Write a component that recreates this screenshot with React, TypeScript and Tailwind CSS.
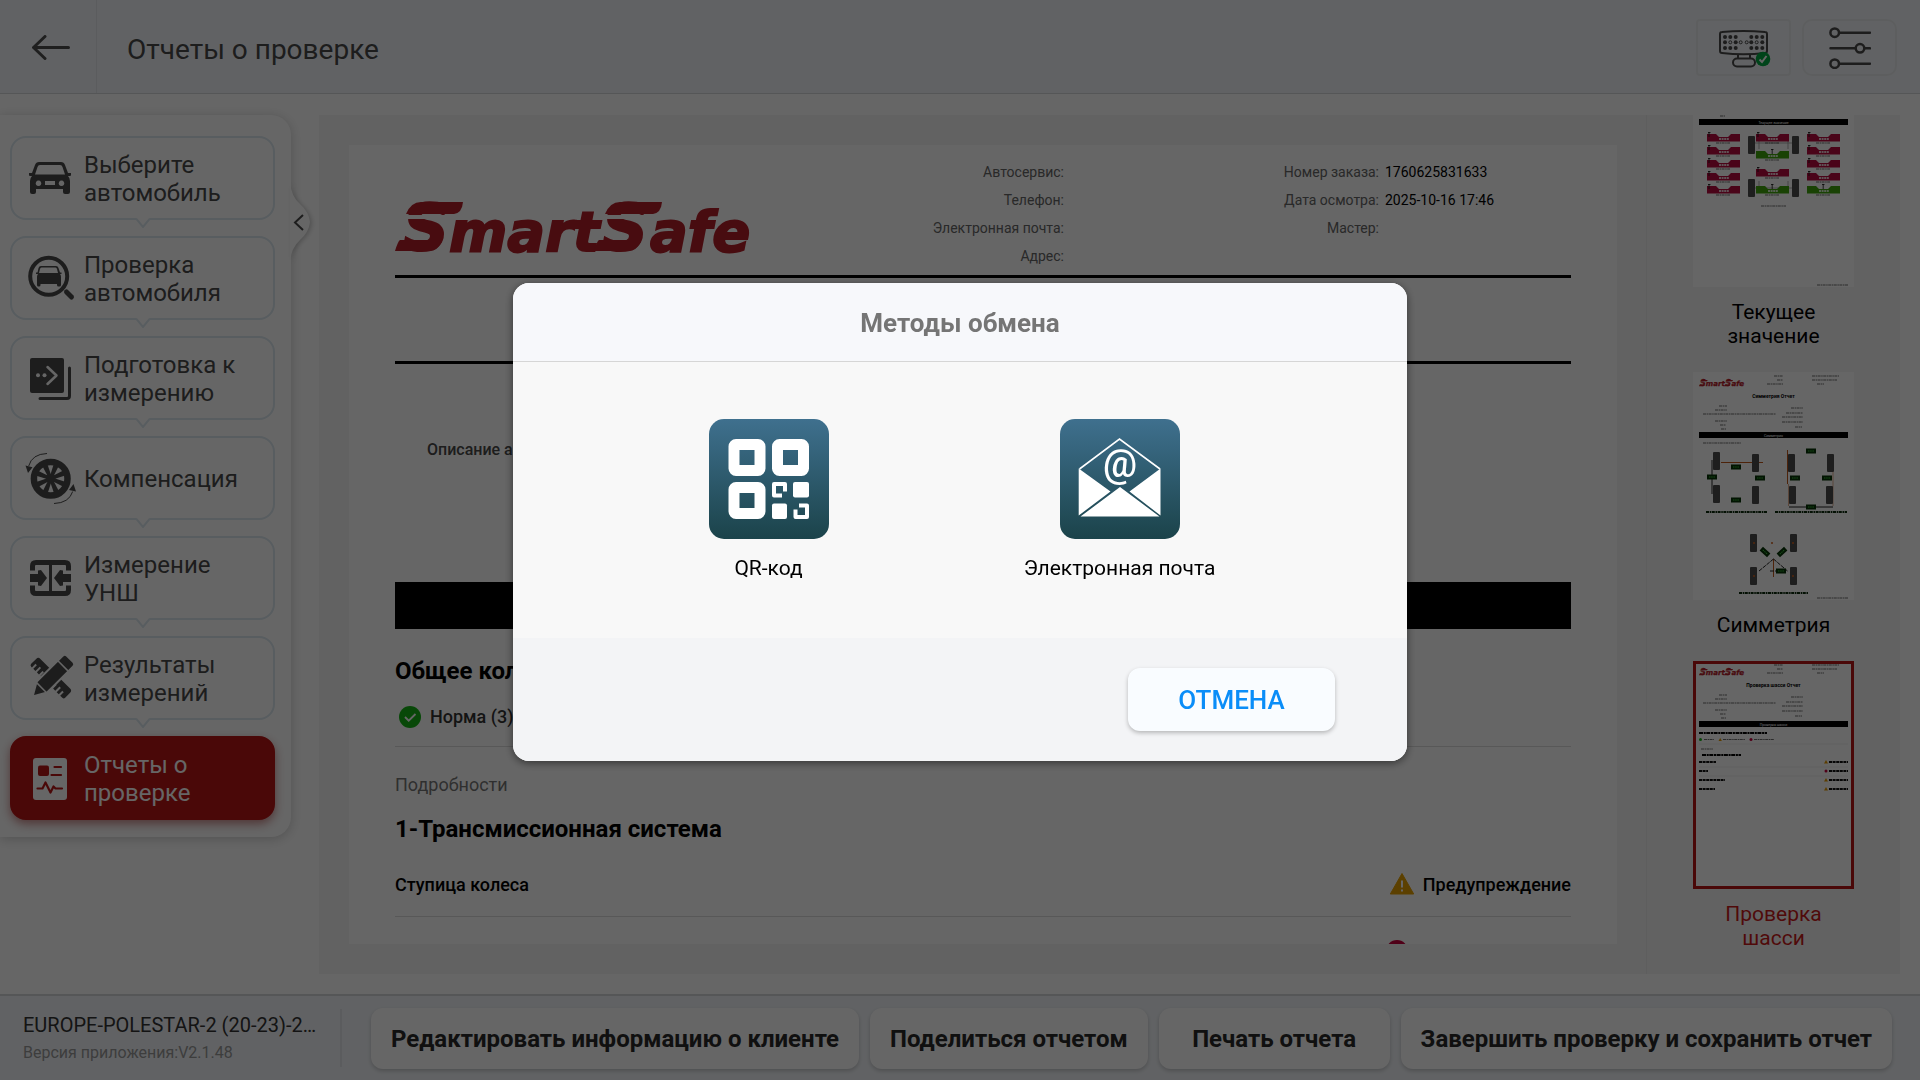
import type { ReactNode } from 'react';
import clsx from 'clsx';

/* ---------- icons ---------- */

function CarShape() {
  return (
    <path
      fillRule="evenodd"
      d="M13 9h22q3 0 4 3l3 8h3v2q0 1-1 1h-2q2 2 2 5v11q0 2-2 2h-3q-2 0-2-2v-3H10v3q0 2-2 2H6q-2 0-2-2V28q0-3 2-5H4q-1 0-1-1v-2h3l3-8q1-3 4-3zm1 3q-2 0-2.500 2L9 21.500h30L36.500 14q-.5-2-2.500-2zM12.500 27.500a2.800 2.800 0 1 0 .01 0zM35.500 27.500a2.800 2.800 0 1 0 .01 0zM19 28v4h10v-4z"
    />
  );
}

function StepIcon({ children }: { children: ReactNode }) {
  return (
    <svg viewBox="0 0 50 50" className="size-[50px] shrink-0 overflow-visible" fill="currentColor" aria-hidden="true">
      {children}
    </svg>
  );
}

const carIcon = (
  <StepIcon>
    <CarShape />
  </StepIcon>
);

const inspectIcon = (
  <StepIcon>
    <circle cx="22.700" cy="23.300" r="18.500" fill="none" stroke="currentColor" strokeWidth="4" />
    <path
      fillRule="evenodd"
      d="M15 13h15q2 0 2.500 2l1.500 4.500h1.500v1.500h-1.500q1 1 1 3v8q0 1.500-1.500 1.500h-1q-1.500 0-1.500-1.500v-1H14.500v1q0 1.500-1.500 1.500h-.5q-1.500 0-1.500-1.500v-8q0-2 1-3h-2v-1.500h1.500L12.500 15q.5-2 2.500-2zm.5 1.500q-1.200 0-1.500 1.500l-1 4h19l-1-4q-.3-1.500-1.500-1.500z"
    />
    <path d="M40.500 39l5 5" stroke="currentColor" strokeWidth="5" strokeLinecap="round" />
  </StepIcon>
);

const prepareIcon = (
  <StepIcon>
    <rect x="4" y="5" width="34" height="35" rx="2" />
    <path d="M43.500 15v28q0 2.500-2.500 2.500H14" fill="none" stroke="currentColor" strokeWidth="3" strokeLinecap="round" />
    <g fill="#fff">
      <circle cx="12" cy="22.300" r="2" />
      <circle cx="18.500" cy="22.300" r="2" />
    </g>
    <path d="M21.500 14l9 8.500-9 8.500" fill="none" stroke="#fff" strokeWidth="2.500" strokeLinecap="round" strokeLinejoin="round" />
  </StepIcon>
);

const wheelIcon = (
  <StepIcon>
    <circle cx="24.700" cy="25.700" r="16.800" fill="none" stroke="currentColor" strokeWidth="6.500" />
    <g>
      {[22, 67, 112, 157, 202, 247, 292, 337].map((a) => (
        <path key={a} d="M24.700 24.200L40 23v5.400l-15.300-1.200z" transform={`rotate(${a} 24.700 25.700)`} />
      ))}
    </g>
    <circle cx="24.700" cy="25.700" r="4.800" />
    <path d="M21 .5Q6 1 2.700 13M28 50.500q15-.5 18.700-12" fill="none" stroke="currentColor" strokeWidth="1" />
    <path d="M-.5 12.500l7 1.800L2 20zM50 38.500l-7-1.500 4.500-6z" />
  </StepIcon>
);

const measureIcon = (
  <StepIcon>
    <path
      d="M6.500 17.500V13q0-3.500 3.500-3.500h29q3.500 0 3.500 3.500v4.500M6.500 32.500V37q0 3.500 3.500 3.500h29q3.500 0 3.500-3.500v-4.500"
      fill="none"
      stroke="currentColor"
      strokeWidth="5"
    />
    <path d="M23 9h3v32h-3zM4 21h8v-3.500l3-.5 6 8-6 8-3-.5V29H4zM45 21h-8v-3.500l-3-.5-6 8 6 8 3-.5V29h8z" />
  </StepIcon>
);

const toolsIcon = (
  <StepIcon>
    <g transform="rotate(45 25 25)">
      <path d="M1 22q0-3 3-3h42q3 0 3 3v7q0 2-2 2h-3v-5h-2v5h-3v-6h-2v6h-3v-5h-2v5H16v-5h-2v5h-3v-6H9v6H6v-5H4v5H3q-2 0-2-2z" />
    </g>
    <g transform="rotate(-45 25 25)">
      <path d="M-1 25l13-7.500h37q3 0 3 3v9q0 3-3 3H12z" stroke="#fff" strokeWidth="2" />
      <path d="M11.500 17v16M42 17v16" stroke="#fff" strokeWidth="1.500" />
    </g>
  </StepIcon>
);

const reportIcon = (
  <StepIcon>
    <rect x="7" y="5" width="34" height="42" rx="3" fill="#fff" />
    <rect x="12" y="12.500" width="11" height="10.500" rx="2" fill="#b91414" />
    <path
      d="M28.500 14H35M25.500 22H35M11.500 35.500h5l3-6 5 10 3-6 2 2H36"
      fill="none"
      stroke="#b91414"
      strokeWidth="2.200"
      strokeLinecap="round"
      strokeLinejoin="round"
    />
  </StepIcon>
);

function DeviceIcon() {
  const rows = [7, 12.3, 18];
  const cols = [6, 11.3, 16.7, 32.3, 37.7, 43.3];
  return (
    <svg viewBox="0 0 52 38" className="h-[38px] w-[52px]" fill="none" stroke="#4a4a4a" aria-hidden="true">
      <path d="M3 2q21.500-2 43 0 2 0 2 2v17q0 2-2 2-21.500 2.500-43 0-2 0-2-2V4q0-2 2-2z" strokeWidth="2" />
      {rows.map((y, r) =>
        cols.map((x, c) =>
          r === 1 && (c === 1 || c === 4) ? (
            <circle key={`${x}-${y}`} cx={x} cy={y} r="1.500" strokeWidth="1" />
          ) : (
            <circle key={`${x}-${y}`} cx={x} cy={y} r="2" fill="#4a4a4a" stroke="none" />
          ),
        ),
      )}
      <circle cx="21.700" cy="12.300" r="1.500" strokeWidth="1" />
      <circle cx="27.700" cy="12.300" r="1.500" strokeWidth="1" />
      <path d="M19 24.500v4M31 24.500v4" strokeWidth="2" />
      <rect x="14" y="28.500" width="22" height="8" rx="4" strokeWidth="2" />
      <circle cx="44" cy="29" r="7.300" fill="#00ab42" stroke="none" />
      <path d="M40.500 29.500l2.500 2.500 4.500-6" stroke="#fff" strokeWidth="2" />
    </svg>
  );
}

function SlidersIcon() {
  return (
    <svg viewBox="0 0 42 42" className="size-[42px]" fill="none" stroke="#4a4a4a" strokeWidth="2.500" strokeLinecap="round" aria-hidden="true">
      <path d="M10.500 5.700H41M1.500 21.300h25M35.500 21.300H41M10.500 36.700H41" />
      <circle cx="5.700" cy="5.700" r="4.300" />
      <circle cx="31" cy="21.300" r="4.300" />
      <circle cx="5.700" cy="36.700" r="4.300" />
    </svg>
  );
}

function QrIcon() {
  return (
    <svg viewBox="0 0 120 120" className="size-[120px]" aria-hidden="true">
      <defs>
        <linearGradient id="tileQr" x1="0" y1="0" x2="0" y2="1">
          <stop offset="0" stopColor="#3f708e" />
          <stop offset="1" stopColor="#1b434a" />
        </linearGradient>
      </defs>
      <rect width="120" height="120" rx="15" fill="url(#tileQr)" />
      <g fill="none" stroke="#fff" strokeWidth="11">
        <rect x="25" y="25.500" width="26" height="26" rx="2" />
        <rect x="68.500" y="25.500" width="26" height="26" rx="2" />
        <rect x="25" y="68.500" width="26" height="26" rx="2" />
      </g>
      <g fill="#fff">
        <rect x="84" y="63" width="16" height="15.500" rx="2" />
        <rect x="63" y="84.500" width="15" height="15.500" rx="2" />
      </g>
      <g fill="none" stroke="#fff" strokeWidth="4" strokeLinejoin="round">
        <path d="M73 76.500h-8V65h11v7.500" />
        <path d="M90 86.500h8V98H86.500v-7.500" />
      </g>
    </svg>
  );
}

function MailIcon() {
  return (
    <svg viewBox="0 0 120 120" className="size-[120px]" aria-hidden="true">
      <defs>
        <linearGradient id="tileMail" x1="0" y1="0" x2="0" y2="1">
          <stop offset="0" stopColor="#3f708e" />
          <stop offset="1" stopColor="#1b434a" />
        </linearGradient>
      </defs>
      <rect width="120" height="120" rx="15" fill="url(#tileMail)" />
      <path d="M19.500 50L59.500 20 100 50" fill="none" stroke="#fff" strokeWidth="1.600" />
      <g fill="#fff">
        <path d="M18.700 49.500L50.500 72.500 18.700 96.500zM100.500 49.500L69.500 72.500l31 24zM60 68l39.500 29.500h-79z" />
        <text x="60" y="58" textAnchor="middle" fontSize="38" fontWeight="500" fontFamily="Roboto, sans-serif">
          @
        </text>
      </g>
    </svg>
  );
}

function OkIcon() {
  return (
    <svg viewBox="0 0 22 22" className="size-[22px]" aria-hidden="true">
      <circle cx="11" cy="11" r="11" fill="#16b516" />
      <path d="M6 11l3.700 3.700L16.500 8" fill="none" stroke="#fff" strokeWidth="1.800" />
    </svg>
  );
}

function WarningIcon() {
  return (
    <svg viewBox="0 0 24 22" className="h-[22px] w-6" aria-hidden="true">
      <path d="M12 .5L23.700 21H.3z" fill="#e5a000" stroke="#e5a000" strokeLinejoin="round" />
      <path d="M12 7.500v7M12 16.500v2" stroke="#fff" strokeWidth="2" />
    </svg>
  );
}

/* ---------- logo ---------- */

// The wide S marks are a text S with a swoosh above and below it
function LogoMark() {
  return (
    <g>
      <text x="8" y="48" fontSize="64" stroke="#b5202a" strokeWidth="2">
        S
      </text>
      <path d="M26 0h42q-1 11-9 12H11Q16 0 26 0z" />
      <path d="M5 38h36l6 2q-5 9-12 9H0q3-10 5-11z" />
      <path d="M9 15h50" stroke="#fff" strokeWidth="4" />
    </g>
  );
}

function LogoDrawing() {
  return (
    <g fill="#b5202a" fontFamily="'DejaVu Sans', sans-serif" fontWeight="700" fontStyle="italic">
      <LogoMark />
      <text x="54" y="49" fontSize="56" stroke="#b5202a" strokeWidth="2">
        mart
      </text>
      <g transform="translate(199 0)">
        <LogoMark />
      </g>
      <text x="255" y="49" fontSize="56" stroke="#b5202a" strokeWidth="2">
        afe
      </text>
    </g>
  );
}

/* ---------- report thumbnails ---------- */

function Dashes({ x, y, w }: { x: number; y: number; w: number }) {
  return <path d={`M${x} ${y}h${w}`} stroke="#333" strokeWidth="1.200" strokeDasharray="3 .6 1.500 .5" opacity=".7" />;
}

function ThumbHeader({ title, bar }: { title: string; bar: string }) {
  return (
    <>
      <g transform="translate(6 8) scale(0.127)">
        <LogoDrawing />
      </g>
      <Dashes x={81} y={4} w={9} />
      <Dashes x={84} y={8} w={6} />
      <Dashes x={74} y={12} w={16} />
      <Dashes x={119} y={4} w={27} />
      <Dashes x={119} y={8} w={25} />
      <Dashes x={124} y={12} w={7} />
      <text x="80.500" y="26" textAnchor="middle" fontSize="5" fontWeight="700">
        {title}
      </text>
      <Dashes x={26} y={34} w={8} />
      <Dashes x={22} y={38} w={12} />
      <Dashes x={10} y={42} w={73} />
      <Dashes x={22} y={49} w={12} />
      <Dashes x={27} y={53} w={6} />
      <Dashes x={28} y={57} w={5} />
      <Dashes x={98} y={36} w={12} />
      <Dashes x={93} y={41} w={17} />
      <Dashes x={89} y={45} w={21} />
      <Dashes x={89} y={50} w={21} />
      <Dashes x={102} y={55} w={7} />
      <rect x="6" y="60" width="149" height="6" />
      <text x="80.500" y="64.500" textAnchor="middle" fontSize="3.500" fill="#fff">
        {bar}
      </text>
    </>
  );
}

function Wheel({ x, y }: { x: number; y: number }) {
  return <rect x={x} y={y} width="7" height="18" rx="1" fill="#4d4d4d" />;
}

function GaugeBox({ x, y, ok }: { x: number; y: number; ok?: boolean }) {
  return (
    <g>
      <path d={`M${x} ${y}h9l3 3h9l3-3h9v7.500h-33z`} fill={ok ? '#3fa50c' : '#b80a40'} />
      <path d={`M${x + 12} ${y + 5}h10`} stroke="#fff" strokeWidth="1.800" strokeDasharray="2 .6" opacity=".8" />
      <path d={`M${ok ? x + 15 : x + 1} ${y - 1.5}h2.500M${ok ? x + 16.2 : x + 2} ${y - 2}v5`} stroke="#111" strokeWidth=".8" />
      <Dashes x={x + 9} y={y + 9} w={14} />
    </g>
  );
}

function CurrentValuesThumb() {
  const rows = [75, 88, 101, 114, 127];
  return (
    <>
      <Dashes x={27} y={57} w={5} />
      <rect x="6" y="60" width="149" height="6" />
      <text x="80.500" y="64.500" textAnchor="middle" fontSize="3.500" fill="#fff">
        Текущее значение
      </text>
      <path d="M62 84h37M66 78v12M95 78v12M62 129h37M66 122v12M95 122v12" stroke="#999" strokeWidth=".8" />
      <Wheel x={55} y={77} />
      <Wheel x={99} y={77} />
      <Wheel x={55} y={120} />
      <Wheel x={99} y={120} />
      {rows.map((y) => (
        <GaugeBox key={y} x={14} y={y} />
      ))}
      {rows.map((y) => (
        <GaugeBox key={y} x={114} y={y} ok={y === 127} />
      ))}
      <GaugeBox x={63} y={75} />
      <GaugeBox x={63} y={92} ok />
      <GaugeBox x={63} y={110} />
      <GaugeBox x={63} y={127} ok />
      <Dashes x={68} y={147} w={25} />
      <Dashes x={124} y={226} w={31} />
    </>
  );
}

function Tag({ x, y, rotate = 0 }: { x: number; y: number; rotate?: number }) {
  return (
    <g transform={`rotate(${rotate} ${x} ${y})`}>
      <rect x={x - 5} y={y - 2.5} width="10" height="5" fill="#053305" />
      <path d={`M${x - 3} ${y}h6`} stroke="#3fbf3f" strokeWidth="1" strokeDasharray="1.500 .7" />
    </g>
  );
}

function SymmetryThumb() {
  return (
    <>
      <ThumbHeader title="Симметрия Отчет" bar="Симметрия" />
      <Dashes x={10} y={71} w={38} />
      <g strokeWidth="1">
        <path d="M28 90.500h42M94.500 78v34M80.500 187v18" stroke="#c1571a" />
        <path d="M95.500 112v22M140 100v34" stroke="#e0b090" />
        <path d="M19 88v34M96 135h44" stroke="#222" />
        <path d="M80.500 187L66 199M80.500 187l14 12M77 199h10" stroke="#222" strokeDasharray="4 1" />
      </g>
      <Wheel x={20} y={80} />
      <Wheel x={59} y={82} />
      <Wheel x={20} y={113} />
      <Wheel x={59} y={114} />
      <Wheel x={95} y={82} />
      <Wheel x={134} y={82} />
      <Wheel x={96} y={114} />
      <Wheel x={133} y={114} />
      <Wheel x={57} y={162} />
      <Wheel x={97} y={162} />
      <Wheel x={57} y={195} />
      <Wheel x={97} y={195} />
      <Tag x={43} y={95} />
      <Tag x={19} y={105} />
      <Tag x={67} y={106} />
      <Tag x={43} y={128} />
      <Tag x={118} y={79} />
      <Tag x={102} y={106} />
      <Tag x={134} y={106} />
      <Tag x={118} y={135} />
      <Tag x={72} y={180} rotate={42} />
      <Tag x={89} y={180} rotate={-42} />
      <Tag x={88} y={199} />
      <g fill="#d0601c">
        <circle cx="61" cy="171" r="1" />
        <circle cx="79" cy="171" r="1" />
        <circle cx="100" cy="171" r="1" />
        <circle cx="61" cy="204" r="1" />
        <circle cx="100" cy="204" r="1" />
      </g>
      <path d="M13 140h61M82 140h72M46 221h69" stroke="#0c2b0c" strokeWidth="2" strokeDasharray="3 .7 1.500 .6" />
      <Dashes x={124} y={226} w={31} />
    </>
  );
}

function ChassisThumb() {
  return (
    <>
      <ThumbHeader title="Проверка шасси Отчет" bar="Проверка шасси" />
      <path d="M6 72h68" stroke="#000" strokeWidth="1.800" strokeDasharray="4 .7 2 .6" />
      <circle cx="7.500" cy="78.500" r="1.500" fill="#16b516" />
      <Dashes x={11} y={78.5} w={10} />
      <path d="M25.500 80l1.700-3 1.700 3z" fill="#e59a00" />
      <Dashes x={30} y={78.5} w={22} />
      <circle cx="58" cy="78.500" r="1.500" fill="#c8003c" />
      <Dashes x={61} y={78.5} w={20} />
      <path d="M6 83h149M6 106h149M6 115h149" stroke="#ddd" strokeWidth=".5" />
      <Dashes x={8} y={88} w={12} />
      <path d="M9 94h39" stroke="#000" strokeWidth="1.800" strokeDasharray="4 .7 2 .6" />
      {[101, 110, 119, 128].map((y, i) => (
        <g key={y}>
          <path d={`M6 ${y}h${[17, 9, 26, 16][i]}M136 ${y}h19`} stroke="#111" strokeWidth="2" strokeDasharray="3 .6" />
          {i === 1 ? <circle cx="133" cy={y} r="1.500" fill="#c8003c" /> : <path d={`M131 ${y + 1.5}l2-3.500 2 3.500z`} fill="#e59a00" />}
        </g>
      ))}
    </>
  );
}

/* ---------- page parts ---------- */

const steps = [
  { label: 'Выберите автомобиль', icon: carIcon },
  { label: 'Проверка автомобиля', icon: inspectIcon },
  { label: 'Подготовка к измерению', icon: prepareIcon },
  { label: 'Компенсация', icon: wheelIcon },
  { label: 'Измерение УНШ', icon: measureIcon },
  { label: 'Результаты измерений', icon: toolsIcon },
  { label: 'Отчеты о проверке', icon: reportIcon, active: true },
];

const thumbs = [
  { label: 'Текущее значение', drawing: <CurrentValuesThumb /> },
  { label: 'Симметрия', drawing: <SymmetryThumb /> },
  { label: 'Проверка шасси', drawing: <ChassisThumb />, active: true },
];

const footerActions = ['Редактировать информацию о клиенте', 'Поделиться отчетом', 'Печать отчета', 'Завершить проверку и сохранить отчет'];

function Header() {
  return (
    <header className="flex h-[94px] shrink-0 items-center border-b border-[#d4d7da] bg-[#f3f6fa]">
      <button type="button" aria-label="Назад" className="flex h-full w-[97px] items-center justify-center border-r border-[#e3e6ea] pt-[2px] pl-[6px]">
        <svg viewBox="0 0 38 25" className="h-[25px] w-[38px]" fill="none" stroke="#4f4f4f" strokeWidth="3" strokeLinecap="round" strokeLinejoin="round" aria-hidden="true">
          <path d="M13 1.500l-11.500 11L13 23.500M2 12.500h34.500" />
        </svg>
      </button>
      <h1 className="pt-[6px] pl-[30px] text-[28px] text-[#4a4a4a]">Отчеты о проверке</h1>
      <div className="ml-auto flex gap-[11px] pt-[2px] pr-[23px]">
        <button type="button" aria-label="Устройство" className="flex h-[57px] w-[95px] items-center justify-center rounded border-2 border-[#e9ecee] pt-[2px] pl-[2px]">
          <DeviceIcon />
        </button>
        <button type="button" aria-label="Настройки" className="flex h-[57px] w-[95px] items-center justify-center rounded-[10px] border-2 border-[#e9ecee]">
          <SlidersIcon />
        </button>
      </div>
    </header>
  );
}

function Sidebar() {
  return (
    <aside className="relative w-[291px] shrink-0 rounded-r-[20px] bg-white pt-[21px] pr-4 pb-[17px] pl-[10px] shadow-[0_2px_12px_rgba(0,0,0,0.2)]">
      <nav className="flex flex-col gap-4">
        {steps.map((step) => (
          <button
            key={step.label}
            type="button"
            className={clsx(
              'relative flex h-[84px] w-full items-center gap-2 rounded-2xl border-2 pl-[14px] text-left text-[24px] leading-7',
              step.active ? 'border-[#b91414] bg-[#b91414] text-white shadow-[0_4px_10px_rgba(150,20,20,0.5)]' : 'border-[#dce8f0] bg-white text-[#4a4a4a]',
            )}
          >
            {step.icon}
            <span className="w-[165px] pt-[2px]">{step.label}</span>
            {!step.active && (
              <svg viewBox="0 0 14 10" className="absolute -bottom-[10px] left-1/2 h-[10px] w-[14px] -translate-x-1/2" aria-hidden="true">
                <path d="M0 0h14v1L7 9 0 1z" fill="#fff" />
                <path d="M0 .5l7 8.500 7-8.500" fill="none" stroke="#dce8f0" strokeWidth="2" />
              </svg>
            )}
          </button>
        ))}
      </nav>
      <button type="button" aria-label="Свернуть" className="absolute top-[67px] -right-5 h-20 w-[21px]">
        <svg viewBox="0 0 21 80" className="h-20 w-[21px] overflow-visible drop-shadow-[2px_1px_2px_rgba(0,0,0,0.2)]" aria-hidden="true">
          <path d="M0 0q1 14 10 22t10 18q-1 10-10 18T0 80z" fill="#fff" />
          <path d="M13 33l-8 7.500 8 7.500" fill="none" stroke="#4a4a4a" strokeWidth="2" />
        </svg>
      </button>
    </aside>
  );
}

function ReportSheet() {
  return (
    <article className="h-full overflow-hidden bg-white px-[46px] text-black">
      <div className="grid h-[130px] grid-cols-[669fr_315fr_192fr] pt-[13px] text-right text-[14px] leading-7 text-[#666]">
        <div className="flex justify-between">
          <svg viewBox="0 0 360 50" className="mt-11 h-[50px] w-[360px] overflow-visible" role="img" aria-label="SmartSafe">
            <LogoDrawing />
          </svg>
          <div>
            <p>Автосервис:</p>
            <p>Телефон:</p>
            <p>Электронная почта:</p>
            <p>Адрес:</p>
          </div>
        </div>
        <div>
          <p>Номер заказа:</p>
          <p>Дата осмотра:</p>
          <p>Мастер:</p>
        </div>
        <div className="pl-[6px] text-left text-black">
          <p>1760625831633</p>
          <p>2025-10-16 17:46</p>
        </div>
      </div>
      <div className="h-[89px] border-y-[3px] border-black" />
      <div className="h-[218px] px-8 pt-[72px] text-[16px] leading-7 font-medium text-[#4a4a4a]">Описание а</div>
      <div className="h-[47px] bg-black" />
      <div className="h-[118px] border-b border-[#ddd] pt-[26px]">
        <h2 className="text-[24px] leading-8 font-bold">Общее кол</h2>
        <p className="flex items-center gap-[9px] pt-[18px] pl-1 text-[18px] leading-6 font-medium text-[#333]">
          <OkIcon />
          Норма (3)
        </p>
      </div>
      <p className="pt-[26px] text-[18px] leading-6 text-[#777]">Подробности</p>
      <h2 className="pt-4 text-[24px] leading-8 font-bold">1-Трансмиссионная система</h2>
      <div className="flex h-[72px] items-center justify-between border-b border-[#ddd] pt-[7px] text-[18px] font-medium">
        <span>Ступица колеса</span>
        <span className="flex items-center gap-[9px]">
          <WarningIcon />
          Предупреждение
        </span>
      </div>
      <div className="flex justify-end pt-[23px] pr-[163px]">
        <span className="size-[22px] rounded-full bg-[#c8003c]" />
      </div>
    </article>
  );
}

function Thumbnails() {
  return (
    <div className="flex w-[254px] shrink-0 flex-col items-center justify-end overflow-hidden border-l border-[#ececec] text-black">
      {thumbs.map((thumb) => (
        <button key={thumb.label} type="button" className="w-[161px] shrink-0 pb-6">
          <svg
            viewBox="0 0 161 228"
            className={clsx('h-[228px] w-[161px] bg-white', thumb.active && 'outline-[3px] -outline-offset-[3px] outline-[#b91414]')}
            fontFamily="Roboto, sans-serif"
            aria-hidden="true"
          >
            {thumb.drawing}
          </svg>
          <span className={clsx('mx-auto block w-[120px] pt-[13px] text-[21px] leading-6', thumb.active && 'text-[#c81a1a]')}>{thumb.label}</span>
        </button>
      ))}
    </div>
  );
}

function Footer() {
  return (
    <footer className="flex h-[86px] shrink-0 items-center border-t-2 border-[#d4d7da] bg-[#f3f6fa] pr-7 pl-[23px]">
      <div className="w-[319px] shrink-0 border-r-2 border-[#e3e6ea] pt-[2px] pr-4">
        <p className="truncate text-[20px] leading-7 text-[#333]">EUROPE-POLESTAR-2 (20-23)-2022</p>
        <p className="text-[16px] leading-7 text-[#999]">Версия приложения:V2.1.48</p>
      </div>
      <div className="ml-[29px] flex grow gap-[11px]">
        {footerActions.map((label) => (
          <button
            key={label}
            type="button"
            className="h-[61px] min-w-[231px] grow rounded-xl bg-white px-4 pt-[2px] text-[24px] font-bold whitespace-nowrap text-[#2a2a2a] shadow-[0_2px_4px_rgba(0,0,0,0.2)]"
          >
            {label}
          </button>
        ))}
      </div>
    </footer>
  );
}

function ShareDialog() {
  return (
    <div className="fixed inset-0 flex items-center justify-center bg-black/60 pb-9">
      <div role="dialog" aria-modal="true" aria-labelledby="share-title" className="w-[894px] overflow-hidden rounded-2xl bg-[#f8f8f8] shadow-[0_2px_8px_rgba(0,0,0,0.5)]">
        <h2 id="share-title" className="flex h-[79px] items-center justify-center border-b border-[#d6d6d6] bg-[#f7f8fb] pt-[2px] text-[26px] font-bold text-[#757575]">
          Методы обмена
        </h2>
        <div className="grid h-[276px] grid-cols-2 items-start pt-[57px] pr-28 pl-20 text-[21px] leading-7 text-black">
          <button type="button" className="flex flex-col items-center gap-[15px]">
            <QrIcon />
            QR-код
          </button>
          <button type="button" className="flex flex-col items-center gap-[15px]">
            <MailIcon />
            Электронная почта
          </button>
        </div>
        <div className="flex h-[123px] items-center justify-end bg-[#f3f4f6] pr-[72px]">
          <button type="button" className="h-[63px] w-[207px] rounded-xl bg-[#f9fcff] pt-[2px] text-[26px] font-medium text-[#0a8df8] shadow-[0_2px_4px_rgba(0,0,0,0.25)]">
            ОТМЕНА
          </button>
        </div>
      </div>
    </div>
  );
}

export default function App() {
  return (
    <div className="flex h-screen flex-col overflow-hidden bg-white font-['Roboto',sans-serif]">
      <Header />
      <main className="flex min-h-0 grow items-start gap-7 pt-[21px] pr-5 pb-5">
        <Sidebar />
        <section className="flex h-full min-w-0 grow bg-[#f6f6f6]">
          <div className="min-w-0 grow py-[30px] pr-[29px] pl-[30px]">
            <ReportSheet />
          </div>
          <Thumbnails />
        </section>
      </main>
      <Footer />
      <ShareDialog />
    </div>
  );
}
